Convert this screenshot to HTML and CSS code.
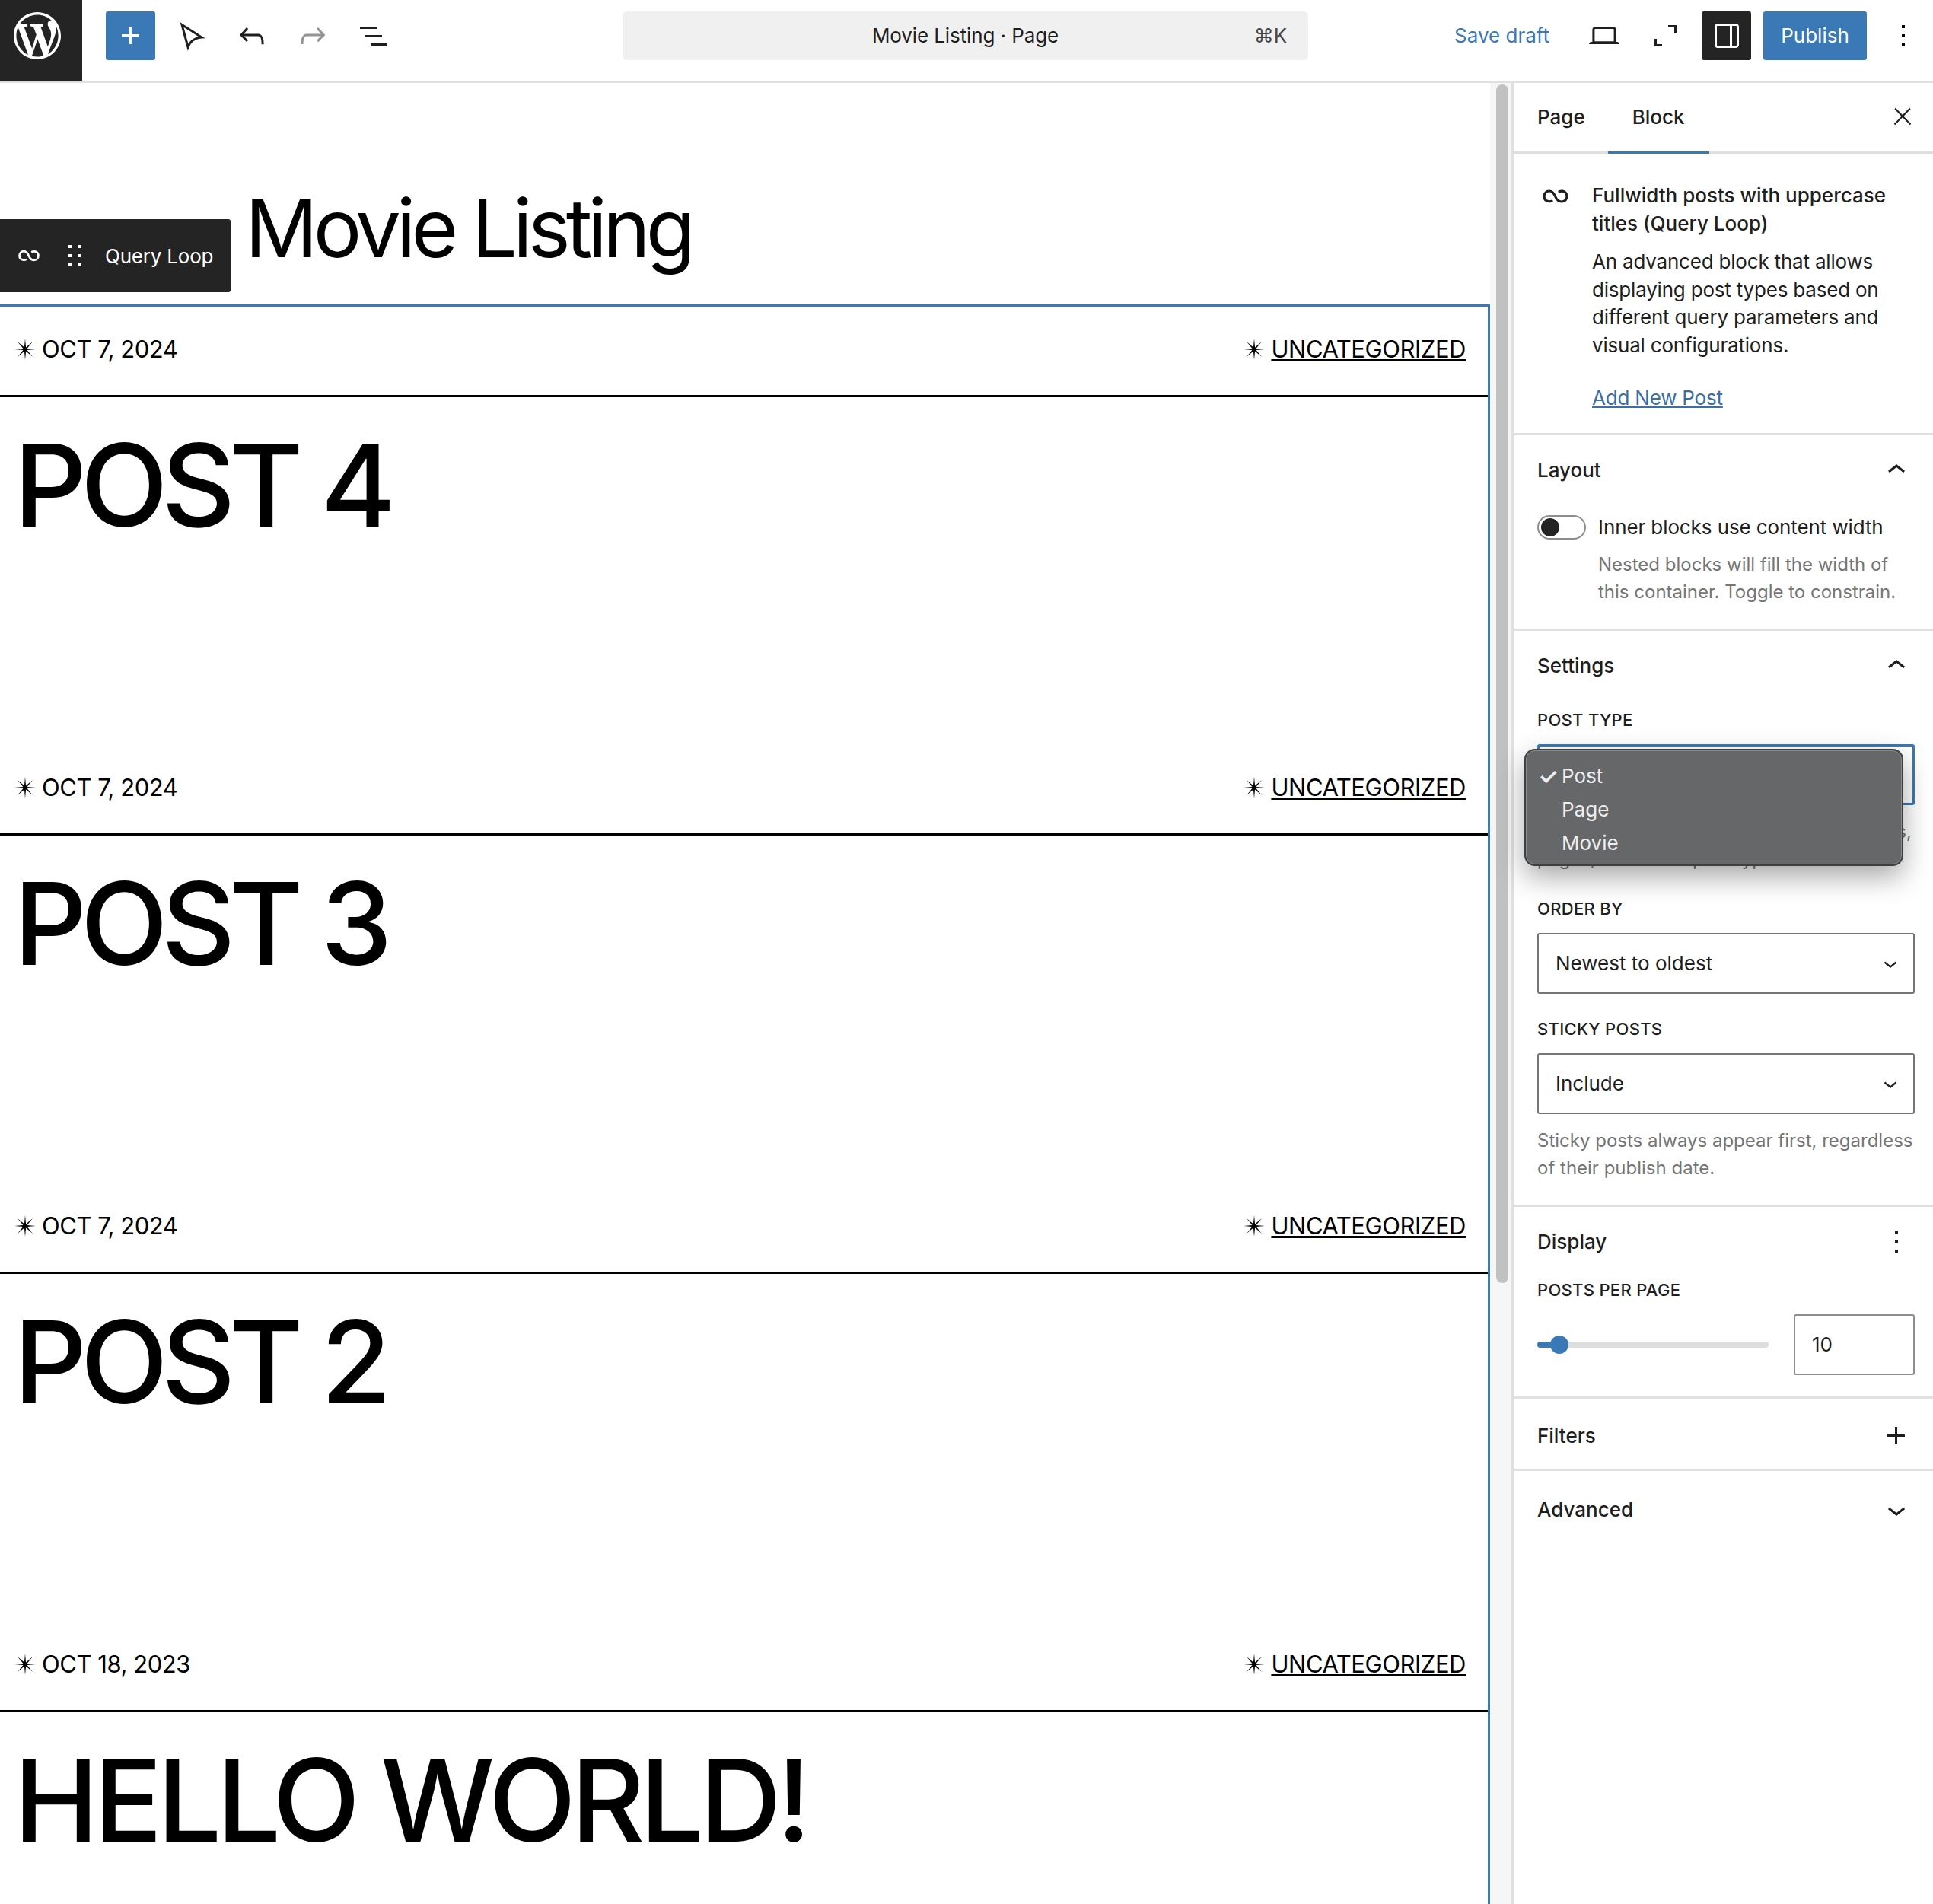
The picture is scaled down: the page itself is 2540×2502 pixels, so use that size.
FILE: index.html
```html
<!DOCTYPE html>
<html lang="en">
<head>
    <meta charset="UTF-8">
    <title>Movie Listing - Page</title>
    <link rel="stylesheet" href="styles.css">
</head>
<body>
    <svg class="defs" width="0" height="0">
        <symbol id="star" viewBox="0 0 24 24"><path d="M12 0L12.920 9.780 20.500 3.500 14.220 11.080 24 12 14.220 12.920 20.500 20.500 12.920 14.220 12 24 11.080 14.220 3.500 20.500 9.780 12.920 0 12 9.780 11.080 3.500 3.500 11.080 9.780z"/></symbol>
        <symbol id="loop" viewBox="0 0 24 24"><path fill="none" stroke="currentColor" stroke-width="1.6" stroke-linecap="round" d="M9.500 15.100C6.500 16 4.500 14.500 4.500 12c0-2.200 1.700-3.500 3.500-3.500 2 0 3 1.500 3.800 3.500.8 2 2 3.500 4.200 3.500 2 0 3.500-1.500 3.500-3.500 0-2.500-2-4-5-3.200"/></symbol>
        <symbol id="up" viewBox="0 0 24 24"><path d="M6.500 12.400L12 8l5.500 4.400-.9 1.200L12 10l-4.500 3.600-1-1.200z"/></symbol>
        <symbol id="down" viewBox="0 0 24 24"><path d="M17.500 11.600L12 16l-5.500-4.400.9-1.200L12 14l4.600-3.600 1 1.200z"/></symbol>
        <symbol id="more" viewBox="0 0 24 24"><path d="M13 19h-2v-2h2v2zm0-6h-2v-2h2v2zm0-6h-2V5h2v2z"/></symbol>
    </svg>

    <header class="topbar">
        <div class="topbar-left">
            <div class="wp-logo">
                <svg viewBox="0 0 20 20" width="62" height="62"><path fill="#fff" d="M20 10c0-5.510-4.490-10-10-10C4.480 0 0 4.490 0 10c0 5.520 4.480 10 10 10 5.510 0 10-4.480 10-10zM7.780 15.370L4.370 6.220c.55-.02 1.170-.08 1.170-.08.5-.06.44-1.130-.06-1.110 0 0-1.450.11-2.370.11-.18 0-.37 0-.58-.01C4.120 2.690 6.870 1.110 10 1.110c2.330 0 4.450.87 6.050 2.340-.68-.11-1.650.39-1.650 1.580 0 .74.45 1.360.9 2.100.35.61.55 1.360.55 2.460 0 1.490-1.400 5-1.400 5l-3.030-8.370c.54-.02.82-.17.82-.17.5-.05.44-1.250-.06-1.220 0 0-1.440.12-2.380.12-.87 0-2.330-.12-2.330-.12-.5-.03-.56 1.200-.06 1.220l.92.08 1.260 3.410zM17.410 10c.24-.64.74-1.870.43-4.250.7 1.290 1.050 2.710 1.050 4.250 0 3.290-1.730 6.240-4.400 7.780.97-2.590 1.940-5.200 2.920-7.780zM6.100 18.090C3.120 16.650 1.110 13.530 1.110 10c0-1.300.23-2.480.72-3.590C3.250 10.300 4.670 14.200 6.100 18.090zm4.030-6.630l2.580 6.980c-.86.29-1.760.45-2.710.45-.79 0-1.570-.11-2.290-.33.81-2.380 1.620-4.740 2.420-7.100z"/></svg>
            </div>
            <button class="btn-square btn-blue">
                <svg viewBox="0 0 24 24" width="48" height="48"><path fill="#fff" d="M11 12.500V17.500H12.500V12.500H17.500V11H12.500V6H11V11H6V12.500H11Z"/></svg>
            </button>
            <div class="tool-icon"><svg viewBox="0 0 24 24" width="48" height="48"><path fill="none" stroke="#1e1e1e" stroke-width="1.500" d="M6 4.700l13 8.300c-4 .3-7.500 2.300-9 6.500z"/></svg></div>
            <div class="tool-icon"><svg viewBox="0 0 24 24" width="48" height="48"><path fill="#1e1e1e" d="M18.300 11.700c-.6-.6-1.400-.9-2.300-.9H6.700l2.900-3.300-1.100-1-4.500 5L8.500 16l1-1-2.700-2.700H16c.5 0 .9.2 1.300.5 1 1 1 3.400 1 4.500v.3h1.500v-.2c0-1.500 0-4.300-1.500-5.700z"/></svg></div>
            <div class="tool-icon"><svg viewBox="0 0 24 24" width="48" height="48"><path fill="#949494" d="M15.600 6.500l-1.100 1 2.900 3.300H8c-.9 0-1.700.3-2.300.9-1.400 1.500-1.400 4.200-1.400 5.600v.2h1.500v-.3c0-1.100 0-3.500 1-4.500.3-.3.7-.5 1.300-.5h9.200L14.500 15l1.100 1.100 4.600-4.600-4.600-5z"/></svg></div>
            <div class="tool-icon"><svg viewBox="0 0 24 24" width="48" height="48"><path fill="#1e1e1e" d="M3 6h11v1.500H3V6zm3.500 5.500h11V13h-11v-1.500zM21 17H10v1.500h11V17z"/></svg></div>
        </div>

        <div class="command-bar">
            <span>Movie Listing · Page</span>
            <span class="shortcut">⌘K</span>
        </div>

        <div class="topbar-right">
            <span class="save-draft">Save draft</span>
            <div class="tool-icon"><svg viewBox="0 0 24 24" width="48" height="48"><path fill="#1e1e1e" d="M20.500 16h-.7V8c0-1.100-.9-2-2-2H6.200c-1.100 0-2 .9-2 2v8h-.7c-.8 0-1.500.7-1.500 1.500h20c0-.8-.7-1.500-1.500-1.500zM5.700 8c0-.3.2-.5.5-.5h11.600c.3 0 .5.2.5.5v7.600H5.700V8z"/></svg></div>
            <div class="tool-icon"><svg viewBox="0 0 24 24" width="48" height="48"><path fill="#1e1e1e" d="M14 5h5.500v5H18V6.500h-4zM5 14h1.500v3.500H10V19H5z"/></svg></div>
            <button class="btn-square btn-dark">
                <svg viewBox="0 0 24 24" width="48" height="48"><path fill="#fff" d="M18 4H6c-1.100 0-2 .9-2 2v12c0 1.100.9 2 2 2h12c1.100 0 2-.9 2-2V6c0-1.100-.9-2-2-2zm-4 14.500H6c-.3 0-.5-.2-.5-.5V6c0-.3.2-.5.5-.5h8v13zm4.500-.5c0 .3-.2.5-.5.5h-2.500v-13H18c.3 0 .5.2.5.5v12z"/></svg>
            </button>
            <button class="btn-publish">Publish</button>
            <div class="tool-icon icon-more"><svg width="48" height="48"><use href="#more"/></svg></div>
        </div>
    </header>

    <div class="workspace">
        <main class="canvas">
            <div class="page-title-row">
                <div class="block-toolbar">
                    <svg class="toolbar-loop" width="40" height="40"><use href="#loop"/></svg>
                    <svg class="toolbar-drag" viewBox="0 0 24 24" width="48" height="48"><path fill="#fff" d="M8 7h2V5H8v2zm0 6h2v-2H8v2zm0 6h2v-2H8v2zm6-14v2h2V5h-2zm0 8h2v-2h-2v2zm0 6h2v-2h-2v2z"/></svg>
                    <span>Query Loop</span>
                </div>
                <h1>Movie Listing</h1>
            </div>

            <section class="query-block">
                <article class="post">
                    <div class="post-meta">
                        <span class="meta-item"><svg class="star"><use href="#star"/></svg>OCT 7, 2024</span>
                        <span class="meta-item"><svg class="star"><use href="#star"/></svg><a href="#">UNCATEGORIZED</a></span>
                    </div>
                    <h2>POST 4</h2>
                </article>
                <article class="post">
                    <div class="post-meta">
                        <span class="meta-item"><svg class="star"><use href="#star"/></svg>OCT 7, 2024</span>
                        <span class="meta-item"><svg class="star"><use href="#star"/></svg><a href="#">UNCATEGORIZED</a></span>
                    </div>
                    <h2>POST 3</h2>
                </article>
                <article class="post">
                    <div class="post-meta">
                        <span class="meta-item"><svg class="star"><use href="#star"/></svg>OCT 7, 2024</span>
                        <span class="meta-item"><svg class="star"><use href="#star"/></svg><a href="#">UNCATEGORIZED</a></span>
                    </div>
                    <h2>POST 2</h2>
                </article>
                <article class="post">
                    <div class="post-meta">
                        <span class="meta-item"><svg class="star"><use href="#star"/></svg>OCT 18, 2023</span>
                        <span class="meta-item"><svg class="star"><use href="#star"/></svg><a href="#">UNCATEGORIZED</a></span>
                    </div>
                    <h2 class="title-loose">HELLO WORLD!</h2>
                </article>
            </section>
        </main>

        <div class="scrollbar"><div class="scroll-thumb"></div></div>

        <aside class="sidebar">
            <div class="tabs">
                <span class="tab">Page</span>
                <span class="tab tab-active">Block</span>
                <svg class="tabs-close" viewBox="0 0 24 24" width="36" height="36"><path fill="#1e1e1e" d="M13 11.800l6.100-6.300-1-1-6.100 6.200-6.100-6.200-1 1 6.100 6.300-6.500 6.700 1 1 6.500-6.600 6.500 6.600 1-1z"/></svg>
            </div>

            <div class="block-card">
                <svg class="card-icon" width="48" height="48"><use href="#loop"/></svg>
                <div>
                    <div class="card-title">Fullwidth posts with uppercase titles (Query Loop)</div>
                    <p class="card-desc">An advanced block that allows displaying post types based on different query parameters and visual configurations.</p>
                    <a class="card-link" href="#">Add New Post</a>
                </div>
            </div>

            <section class="panel">
                <div class="panel-head"><span>Layout</span><svg width="48" height="48"><use href="#up"/></svg></div>
                <div class="toggle-row">
                    <div class="toggle"><div class="toggle-dot"></div></div>
                    <span>Inner blocks use content width</span>
                </div>
                <p class="help help-indented">Nested blocks will fill the width of this container. Toggle to constrain.</p>
            </section>

            <section class="panel">
                <div class="panel-head"><span>Settings</span><svg width="48" height="48"><use href="#up"/></svg></div>
                <div class="field-label field-first">POST TYPE</div>
                <div class="select-wrap">
                    <div class="select select-focus"></div>
                    <div class="select-popup">
                        <div class="popup-item"><span class="popup-check">✓</span>Post</div>
                        <div class="popup-item">Page</div>
                        <div class="popup-item">Movie</div>
                    </div>
                </div>
                <p class="help help-field">Select the type of content to display: posts, pages, or custom post types.</p>
                <div class="field-label field-order">ORDER BY</div>
                <div class="select"><span>Newest to oldest</span><svg width="36" height="36"><use href="#down"/></svg></div>
                <div class="field-label field-sticky">STICKY POSTS</div>
                <div class="select"><span>Include</span><svg width="36" height="36"><use href="#down"/></svg></div>
                <p class="help help-field">Sticky posts always appear first, regardless of their publish date.</p>
            </section>

            <section class="panel panel-display">
                <div class="panel-head"><span>Display</span><svg width="48" height="48"><use href="#more"/></svg></div>
                <div class="field-label field-range">POSTS PER PAGE</div>
                <div class="range-row">
                    <div class="range">
                        <div class="range-fill"></div>
                        <div class="range-thumb"></div>
                    </div>
                    <div class="number-input">10</div>
                </div>
            </section>

            <section class="panel panel-closed">
                <div class="panel-head"><span>Filters</span><svg viewBox="0 0 24 24" width="48" height="48"><path d="M11 12.500V17.500H12.500V12.500H17.500V11H12.500V6H11V11H6V12.500H11Z"/></svg></div>
            </section>

            <section class="panel panel-closed panel-last">
                <div class="panel-head"><span>Advanced</span><svg width="48" height="48"><use href="#down"/></svg></div>
            </section>
        </aside>
    </div>
</body>
</html>
```

FILE: styles.css
```css
* {
    box-sizing: border-box;
}
html, body {
    margin: 0;
    height: 2502px;
    overflow: hidden;
}
body {
    font-family: Inter, "Noto Sans", sans-serif;
    font-size: 26px;
    color: #1e1e1e;
    background: #fff;
}
.defs {
    position: absolute;
}
button {
    border: none;
    font-family: inherit;
    padding: 0;
}

/* top bar */
.topbar {
    height: 109px;
    border-bottom: 3px solid #e0e0e0;
    display: grid;
    grid-template-columns: 818px 901px 1fr;
    align-items: start;
}
.topbar-left {
    display: flex;
    align-items: flex-start;
}
.wp-logo {
    width: 108px;
    height: 106px;
    background: #242424;
    padding: 0 10px 13px 0;
    display: flex;
    align-items: center;
    justify-content: center;
}
.btn-square {
    width: 65px;
    height: 64px;
    border-radius: 3px;
    display: flex;
    align-items: center;
    justify-content: center;
}
.btn-blue {
    background: #3a79b6;
    margin: 15px 0 0 31px;
}
.btn-dark {
    background: #242424;
    margin-left: 8px;
}
.tool-icon {
    width: 80px;
    height: 64px;
    display: flex;
    align-items: center;
    justify-content: center;
}
.topbar-left .tool-icon {
    margin-top: 15px;
}
.topbar-left .tool-icon:nth-child(3) {
    margin-left: 7px;
}
.command-bar {
    height: 64px;
    margin-top: 15px;
    padding-bottom: 2px;
    background: #f0f0f0;
    border-radius: 6px;
    display: flex;
    align-items: center;
    justify-content: center;
    position: relative;
    color: #1e1e1e;
    letter-spacing: -.1px;
}
.shortcut {
    position: absolute;
    right: 28px;
    color: #444;
}
.topbar-right {
    display: flex;
    align-items: center;
    margin-top: 15px;
    padding-left: 192px;
}
.save-draft {
    color: #3a79b6;
    width: 157px;
    padding-bottom: 2px;
}
.btn-publish {
    background: #3a79b6;
    color: #fff;
    font-size: 26px;
    width: 136px;
    height: 64px;
    padding-bottom: 2px;
    border-radius: 3px;
    margin-left: 16px;
}
.icon-more {
    width: 48px;
    margin-left: 24px;
}

/* layout under the bar */
.workspace {
    display: flex;
    height: 2393px;
}
.canvas {
    width: 1958px;
    overflow: hidden;
}
.page-title-row {
    height: 291px;
    padding: 138px 0 0 322px;
    position: relative;
}
.page-title-row h1 {
    margin: 0;
    font-size: 106px;
    font-weight: 400;
    line-height: 1;
    letter-spacing: -6px;
    color: #000;
}
.block-toolbar {
    position: absolute;
    left: 0;
    top: 179px;
    width: 303px;
    height: 96px;
    background: #242424;
    border-radius: 0 3px 3px 0;
    color: #fff;
    display: flex;
    align-items: center;
}
.toolbar-loop {
    margin-left: 18px;
    color: #fff;
}
.toolbar-drag {
    margin-left: 16px;
}
.block-toolbar span {
    margin-left: 16px;
    letter-spacing: -.2px;
}
.query-block {
    border-top: 3px solid #3a79b6;
    border-right: 3px solid #3a79b6;
    color: #000;
}
.post {
    height: 576px;
}
.post-meta {
    height: 119px;
    border-bottom: 3px solid #000;
    padding: 0 29px 5px 20px;
    display: flex;
    justify-content: space-between;
    align-items: center;
    font-size: 31px;
    letter-spacing: -.45px;
}
.meta-item {
    display: flex;
    align-items: center;
}
.meta-item a {
    color: #000;
}
.star {
    width: 28px;
    height: 28px;
    fill: #000;
    margin: 0 8px 0 -1px;
}
.post h2 {
    margin: 26px 0 0 18px;
    font-size: 150px;
    font-weight: 500;
    line-height: 180px;
    letter-spacing: -8.5px;
}
.post .title-loose {
    letter-spacing: -6.8px;
}

/* scrollbar */
.scrollbar {
    width: 28px;
    background: #f6f6f6;
    padding: 2px 4px 0 8px;
}
.scroll-thumb {
    width: 16px;
    height: 1575px;
    background: #c1c1c1;
    border-radius: 8px;
}

/* settings sidebar */
.sidebar {
    width: 554px;
    border-left: 3px solid #e0e0e0;
}
.tabs {
    height: 93px;
    border-bottom: 3px solid #e0e0e0;
    display: flex;
    padding-left: 31px;
    position: relative;
}
.tab {
    height: 93px;
    line-height: 90px;
    font-weight: 500;
    margin-right: 62px;
    position: relative;
}
.tab-active::after {
    content: "";
    position: absolute;
    left: -32px;
    right: -32px;
    bottom: 0;
    height: 3px;
    background: #3a79b6;
}
.tabs-close {
    position: absolute;
    right: 22px;
    top: 26px;
}
.block-card {
    padding: 37px 24px 27px 31px;
    border-bottom: 3px solid #e0e0e0;
    display: flex;
    gap: 24px;
    line-height: 36.500px;
}
.card-icon {
    color: #1e1e1e;
    flex: none;
    width: 48px;
    height: 48px;
    margin-top: -5px;
}
.card-title {
    font-weight: 500;
}
.card-desc {
    margin: 14px 0 33px;
    letter-spacing: -.2px;
}
.card-link {
    color: #3a6ea5;
    letter-spacing: -.2px;
}
.panel {
    padding: 28px 24px 30px 31px;
    border-bottom: 3px solid #e0e0e0;
}
.panel-display {
    padding-bottom: 28px;
}
.panel-closed {
    padding-top: 31px;
    padding-bottom: 25px;
}
.panel-last {
    padding-top: 33px;
    border-bottom: none;
}
.panel-head {
    height: 36px;
    display: flex;
    justify-content: space-between;
    align-items: center;
    font-weight: 500;
}
.panel-head svg {
    fill: #1e1e1e;
}
.toggle-row {
    display: flex;
    align-items: center;
    margin-top: 39px;
    gap: 16px;
    height: 36px;
    letter-spacing: -.1px;
}
.toggle {
    width: 64px;
    height: 32px;
    border: 2px solid #8d8d8d;
    border-radius: 16px;
    padding: 2px 3px;
}
.toggle-dot {
    width: 24px;
    height: 24px;
    border-radius: 50%;
    background: #242424;
}
.help {
    margin: 0;
    font-size: 24px;
    color: #757575;
    line-height: 36px;
}
.help-indented {
    margin-top: 13px;
    padding-left: 80px;
}
.help-field {
    margin-top: 17px;
}
.field-label {
    font-size: 22px;
    font-weight: 500;
    line-height: 30px;
    letter-spacing: .3px;
    margin-bottom: 17px;
}
.field-first {
    margin-top: 38px;
}
.field-range {
    margin-top: 30px;
}
.field-order {
    margin-top: 32px;
}
.field-sticky {
    margin-top: 31px;
}
.select-wrap {
    position: relative;
}
.select {
    height: 80px;
    border: 2px solid #757575;
    border-radius: 3px;
    display: flex;
    align-items: center;
    justify-content: space-between;
    padding: 0 12px 0 22px;
}
.select svg {
    fill: #1e1e1e;
}
.select-focus {
    border: 3px solid #3a79b6;
}
.select-popup {
    position: absolute;
    left: -17px;
    top: 6px;
    width: 498px;
    height: 154px;
    padding-top: 12px;
    background: #666768;
    border: 2px solid #3f3f3f;
    border-radius: 14px;
    box-shadow: inset 0 0 0 1px #8a8a8a, 0 14px 36px rgba(0, 0, 0, .35);
    color: #eee;
}
.popup-item {
    height: 44px;
    line-height: 44px;
    padding-left: 47px;
    position: relative;
}
.popup-check {
    position: absolute;
    left: 16px;
    font-size: 30px;
    font-weight: 600;
}
.range-row {
    display: flex;
    align-items: center;
    justify-content: space-between;
    height: 80px;
}
.range {
    width: 304px;
    height: 8px;
    background: #ddd;
    border-radius: 4px;
    position: relative;
}
.range-fill {
    width: 40px;
    height: 8px;
    background: #3a79b6;
    border-radius: 4px;
}
.range-thumb {
    position: absolute;
    left: 17px;
    top: -8px;
    width: 24px;
    height: 24px;
    border-radius: 50%;
    background: #3a79b6;
}
.number-input {
    width: 159px;
    height: 80px;
    border: 2px solid #8d8d8d;
    border-radius: 3px;
    line-height: 76px;
    padding-left: 22px;
}
```
